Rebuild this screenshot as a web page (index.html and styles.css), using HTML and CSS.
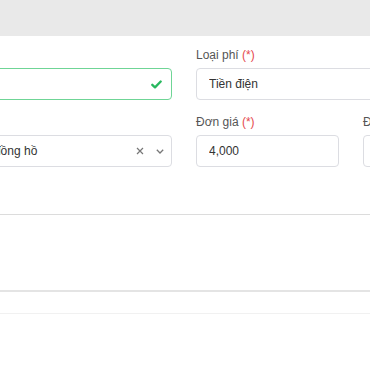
FILE: index.html
```html
<!DOCTYPE html>
<html lang="vi">
<head>
  <meta charset="UTF-8">
  <meta name="viewport" content="width=device-width, initial-scale=1.0">
  <title>Phí dịch vụ</title>
  <link rel="stylesheet" href="styles.css">
</head>
<body>
  <div class="topbar"></div>

  <div class="form">
    <div class="row">
      <div class="field wide">
        <label>&nbsp;</label>
        <div class="input valid">
          <span class="value"></span>
          <svg class="check" width="11" height="9" viewBox="0 0 11 9">
            <path d="M1.3 4.8 L4 7.4 L9.7 1.5" fill="none" stroke="#28b85f" stroke-width="2.3" stroke-linecap="round" stroke-linejoin="round"/>
          </svg>
        </div>
      </div>
      <div class="field wide">
        <label>Loại phí <span class="req">(*)</span></label>
        <div class="input"><span class="value">Tiền điện</span></div>
      </div>
    </div>

    <div class="row">
      <div class="field wide">
        <label>&nbsp;</label>
        <div class="input select">
          <span class="value">Đo theo chỉ số công tơ đồng hồ</span>
          <span class="clear">
            <svg width="8" height="8" viewBox="0 0 8 8"><path d="M1 1 L7 7 M7 1 L1 7" stroke="#777" stroke-width="1.2"/></svg>
          </span>
          <span class="caret">
            <svg width="8" height="5" viewBox="0 0 8 5"><path d="M0.8 0.8 L4 4 L7.2 0.8" fill="none" stroke="#777" stroke-width="1.3"/></svg>
          </span>
        </div>
      </div>
      <div class="field narrow">
        <label>Đơn giá <span class="req">(*)</span></label>
        <div class="input"><span class="value">4,000</span></div>
      </div>
      <div class="field narrow">
        <label>Đơn vị <span class="req">(*)</span></label>
        <div class="input"><span class="value"></span></div>
      </div>
    </div>
  </div>

  <div class="section"></div>
  <div class="footer"></div>
</body>
</html>
```

FILE: styles.css
```css
body {
  margin: 0;
  width: 370px;
  overflow: hidden;
  background: #fff;
  font-family: 'Liberation Sans', Arial, sans-serif;
  font-size: 12px;
  color: #333;
}

.topbar {
  height: 36px;
  background: #e9e9e9;
}

.form {
  margin-left: -143px;
  padding-top: 10px;
  padding-bottom: 1px;
  width: 900px;
}

.row {
  display: flex;
  gap: 24px;
  margin-bottom: 13px;
}

.field.wide {
  width: 315px;
  flex: none;
}

.field.narrow {
  width: 143px;
  flex: none;
}

label {
  display: block;
  height: 18px;
  line-height: 18px;
  margin-bottom: 4px;
  color: #555;
}

.req {
  color: #e5484d;
}

.input {
  box-sizing: border-box;
  height: 32px;
  border: 1px solid #dcdde2;
  border-radius: 4px;
  display: flex;
  align-items: center;
  padding: 0 12px;
  gap: 12px;
}

.input .value {
  flex: 1;
  white-space: nowrap;
  overflow: hidden;
}

.input.valid {
  border-color: #6fd596;
  padding-right: 9px;
}

.select {
  padding-right: 7px;
}

.select .clear,
.select .caret {
  display: flex;
  align-items: center;
}

.section {
  margin-top: 33px;
  height: 75px;
  border-top: 1px solid #dcdcdc;
  border-bottom: 2px solid #e4e4e4;
}

.footer {
  height: 21px;
  border-bottom: 1px solid #f1f1f1;
}
```
